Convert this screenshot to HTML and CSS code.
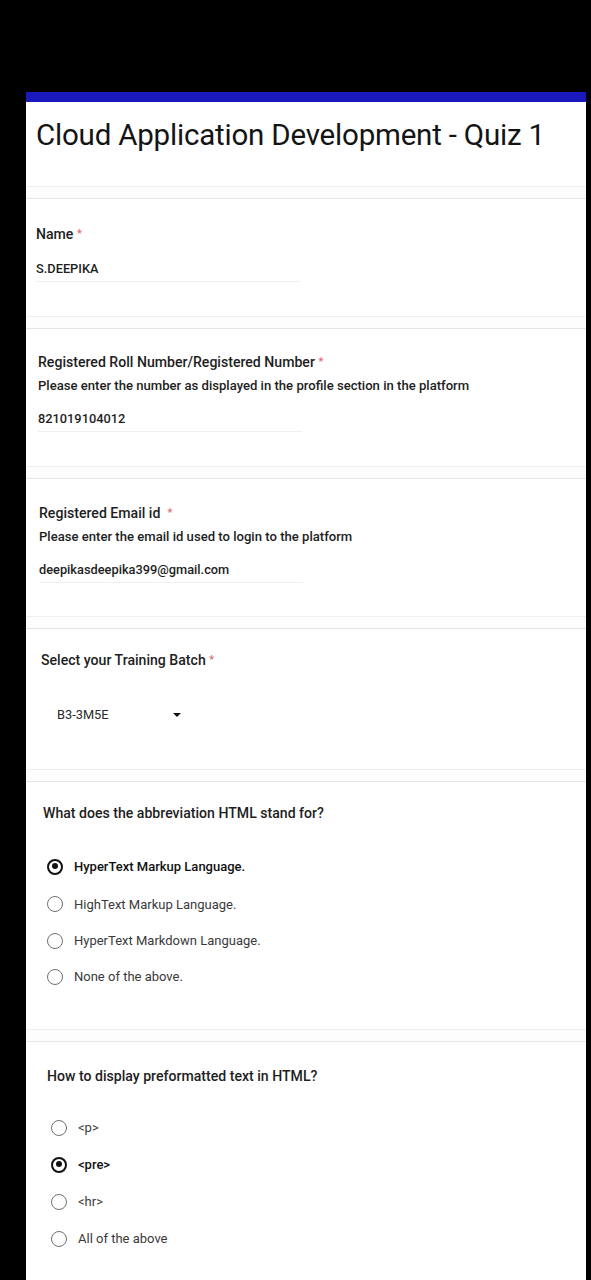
FILE: index.html
```html
<!DOCTYPE html>
<html lang="en">
<head>
<meta charset="utf-8">
<title>Cloud Application Development - Quiz 1</title>
<link rel="stylesheet" href="styles.css">
</head>
<body>
<div class="sheet">
  <section class="card card-title">
    <div class="accent"></div>
    <h1 class="form-title">Cloud Application Development - Quiz 1</h1>
  </section>
  <div class="sep"></div>
  <section class="card card-name">
    <div class="label">Name <span class="req">*</span></div>
    <div class="answer short">S.DEEPIKA</div>
  </section>
  <div class="sep"></div>
  <section class="card card-roll">
    <div class="label">Registered Roll Number/Registered Number <span class="req">*</span></div>
    <div class="help">Please enter the number as displayed in the profile section in the platform</div>
    <div class="answer">821019104012</div>
  </section>
  <div class="sep"></div>
  <section class="card card-email">
    <div class="label">Registered Email id &nbsp;<span class="req">*</span></div>
    <div class="help">Please enter the email id used to login to the platform</div>
    <div class="answer">deepikasdeepika399@gmail.com</div>
  </section>
  <div class="sep"></div>
  <section class="card card-batch">
    <div class="label">Select your Training Batch <span class="req">*</span></div>
    <div class="dropdown">
      <span class="dd-value">B3-3M5E</span>
      <span class="dd-arrow"></span>
    </div>
  </section>
  <div class="sep"></div>
  <section class="card card-q1">
    <div class="label">What does the abbreviation HTML stand for?</div>
    <ul class="options">
      <li class="opt checked"><span class="radio"></span>HyperText Markup Language.</li>
      <li class="opt"><span class="radio"></span>HighText Markup Language.</li>
      <li class="opt"><span class="radio"></span>HyperText Markdown Language.</li>
      <li class="opt"><span class="radio"></span>None of the above.</li>
    </ul>
  </section>
  <div class="sep"></div>
  <section class="card card-q2">
    <div class="label">How to display preformatted text in HTML?</div>
    <ul class="options">
      <li class="opt"><span class="radio"></span>&lt;p&gt;</li>
      <li class="opt checked"><span class="radio"></span>&lt;pre&gt;</li>
      <li class="opt"><span class="radio"></span>&lt;hr&gt;</li>
      <li class="opt"><span class="radio"></span>All of the above</li>
    </ul>
  </section>
</div>
</body>
</html>
```
FILE: styles.css
```css
html, body {
  margin: 0;
  padding: 0;
  background: #000;
}
body {
  font-family: Roboto, "Liberation Sans", Arial, sans-serif;
  color: #202124;
  height: 1280px;
  overflow: hidden;
}
.sheet {
  margin: 92px 5px 0 26px;
  background: #fff;
  min-height: 1188px;
}
.card {
  background: #fff;
}
.sep {
  height: 11px;
  border-top: 1px solid #efefef;
  border-bottom: 1px solid #e6e6e6;
  background: #fdfdfd;
}
.accent {
  height: 10px;
  margin-top: 2px;
  background: #1a19bd;
}
.card-title {
  height: 94px;
}
.form-title {
  margin: 0;
  padding: 15px 0 0 10px;
  font-size: 29.5px;
  font-weight: 400;
  line-height: 36px;
  color: #141414;
  letter-spacing: -0.2px;
}
.label {
  font-size: 14.1px;
  font-weight: 500;
  line-height: 18px;
  color: #1e1e1e;
}
.req {
  color: #e06a6a;
  font-size: 11px;
  vertical-align: 2px;
}
.help {
  font-size: 13.1px;
  line-height: 18px;
  margin-top: 6px;
  color: #1e1e1e;
  font-weight: 500;
}
.answer {
  font-size: 12.8px;
  font-weight: 500;
  line-height: 18px;
  color: #1e1e1e;
  margin-top: 15px;
  padding-bottom: 3px;
  width: 264px;
  border-bottom: 1px solid #f0f0f0;
}
.card-name { height: 117px; padding: 26px 0 0 10px; box-sizing: border-box; }
.card-name .answer { margin-top: 17px; }
.card-roll { height: 137px; padding: 24px 0 0 12px; box-sizing: border-box; }
.card-email { height: 137px; padding: 25px 0 0 13px; box-sizing: border-box; }
.card-batch { height: 140px; padding: 22px 0 0 15px; box-sizing: border-box; }
.dropdown {
  display: flex;
  align-items: center;
  margin-top: 37px;
  padding-left: 16px;
  width: 118px;
  justify-content: space-between;
  font-size: 12.8px;
  color: #2a2a2a;
  line-height: 18px;
}
.dd-arrow {
  width: 0;
  height: 0;
  border-left: 4px solid transparent;
  border-right: 4px solid transparent;
  border-top: 4px solid #111;
  margin-right: -6px;
}
.card-q1 { height: 247px; padding: 22px 0 0 17px; box-sizing: border-box; }
.card-q2 { padding: 25px 0 0 21px; box-sizing: border-box; }
.options {
  list-style: none;
  margin: 0;
  padding: 0 0 0 4px;
}
.card-q1 .options { margin-top: 26px; }
.card-q2 .options { margin-top: 24px; }
.opt {
  display: flex;
  align-items: center;
  gap: 11px;
  font-size: 13px;
  color: #3a3a3a;
  height: 37px;
}
.card-q1 .opt:nth-child(2) { height: 38px; }
.card-q1 .opt:nth-child(3) { height: 35px; }
.radio {
  box-sizing: border-box;
  width: 16px;
  height: 16px;
  border: 1.6px solid #707070;
  border-radius: 50%;
  flex: none;
  position: relative;
}
.opt.checked {
  color: #111;
  font-weight: 500;
}
.opt.checked .radio {
  border: 2.5px solid #111;
}
.opt.checked .radio::after {
  content: "";
  position: absolute;
  left: 2.5px;
  top: 2.5px;
  width: 6px;
  height: 6px;
  border-radius: 50%;
  background: #111;
}
```
